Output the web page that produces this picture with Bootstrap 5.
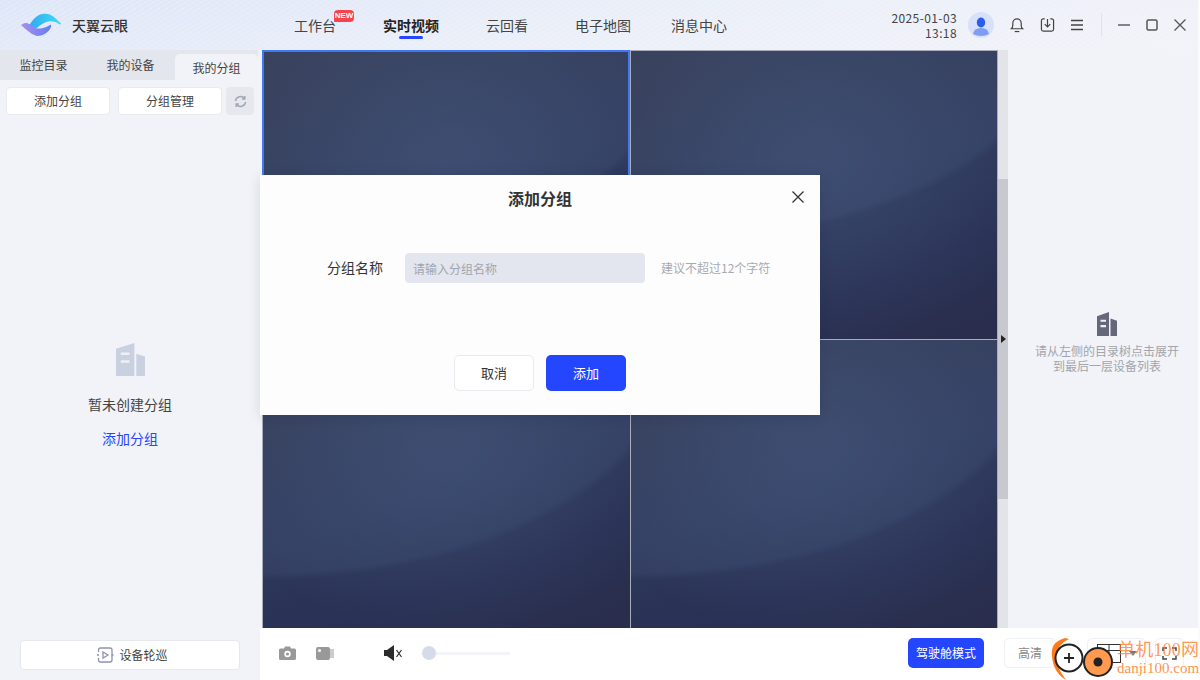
<!DOCTYPE html>
<html lang="zh-CN">
<head>
  <meta charset="UTF-8">
  <title>天翼云眼</title>
  <link href="https://cdn.jsdelivr.net/npm/bootstrap@5.3.0/dist/css/bootstrap.min.css" rel="stylesheet">
  <style>
    html, body { height: 680px; overflow: hidden; }
    body { font-family: "Noto Sans CJK SC", "Noto Sans", sans-serif; font-size: 12px; color: #333; background: #fbfbfc; }
    .app-shell { width: 1198px; height: 680px; position: relative; background: #f1f3f8; }

    .top-bar { height: 50px; background: repeating-linear-gradient(150deg, rgba(255,255,255,0) 0 2px, rgba(255,255,255,.12) 2px 4px), linear-gradient(170deg, #dde6f8 0%, #eaeef8 45%, #f1f3f8 100%); }
    .logo-area { width: 260px; padding-left: 20px; gap: 10px; }
    .logo-name { font-size: 14px; font-weight: 500; color: #333; margin-left: -1px; padding-left: 1px; }
    .main-menu { margin-left: 34px; gap: 47px; font-size: 14px; height: 50px; }
    .menu-item { position: relative; color: #444; line-height: 50px; }
    .menu-item:last-child { margin-left: -7px; }
    .menu-item.is-on { font-weight: 700; color: #222; }
    .menu-item.is-on::after { content: ""; position: absolute; left: 16px; right: 16px; bottom: 11px; height: 3px; border-radius: 2px; background: #2546ff; }
    .new-tag { position: absolute; top: 10px; left: 40px; width: 20px; height: 12px; border-radius: 4px 4px 4px 1px; background: #f5454f; color: #fff; font: 700 8px/12px "Liberation Sans", sans-serif; text-align: center; }
    .top-right { padding-right: 12px; }
    .date-box { font-size: 12px; letter-spacing: .4px; line-height: 15px; text-align: right; color: #444; margin-right: 11px; }
    .avatar-ring { width: 26px; height: 26px; border-radius: 50%; background: #d8e1fa; overflow: hidden; margin-right: 16px; }
    .top-icon { margin-right: 16px; }
    .top-sep { width: 1px; height: 24px; background: #e0e3ea; margin: 0 16px 0 18px; }

    .side-panel { width: 260px; height: 630px; background: #f1f3f8; }
    .tab-row { height: 30px; background: #e3e6ec; width: 258px; }
    .tab-cell { width: 87px; text-align: center; line-height: 30px; color: #444; }
    .tab-cell.is-on { background: #f1f3f8; border-radius: 5px 5px 0 0; margin-top: 4px; line-height: 28px; height: 26px; width: 83px; margin-left: 1px; }
    .tool-row { padding: 7px 6px 0; gap: 8px; }
    .white-btn { width: 104px; height: 28px; padding: 0; font-size: 12px; color: #444; background: #fff; border: 1px solid #e8eaf1; border-radius: 4px; }
    .refresh-btn { width: 28px; height: 28px; margin-left: -4px; background: #e6e8ee; border-radius: 4px; }
    .empty-box { flex: 1; padding-top: 228px; }
    .empty-title { font-size: 14px; line-height: 21px; color: #444; margin-top: 18px; }
    .empty-link { font-size: 14px; line-height: 21px; color: #2546ff; margin-top: 13px; }
    .patrol-btn { width: 220px; height: 30px; margin: 0 0 10px 20px; color: #444; font-size: 12px; background: #fff; border: 1px solid #e6e8ef; border-radius: 4px; gap: 5px; }

    .center-col { width: 748px; height: 630px; }
    .video-wrap { height: 578px; }
    .video-grid { width: 736px; margin-left: 2px; height: 578px; display: grid; grid-template-columns: 367px 366px; grid-template-rows: 288px 288px; gap: 1px; background: #a9adba; padding: 1px 1px 0; }
    .video-cell {
      --edge-y: 240px;
      background:
        radial-gradient(ellipse 230px 190px at 50% 38%, rgba(70,90,128,.5), rgba(70,90,128,0) 100%),
        radial-gradient(ellipse 420px var(--edge-y) at 0 0, rgba(96,116,160,.14) 97%, rgba(96,116,160,0) 100%),
        linear-gradient(160deg, #33384f 0%, #2d385a 50%, #293154 75%, #2a2d4c 100%);
    }
    .video-cell.top-cell { --edge-y: 195px; }
    .video-cell.is-active { --edge-y: 225px; margin: -1px 0 0 -1px; outline: 2px solid #3f79f5; outline-offset: -2px; }
    .video-side { width: 10px; background: #e3e4e8; position: relative; }
    .side-thumb { position: absolute; left: 0; right: 0; top: 129px; height: 320px; background: #c8c9ce; }
    .side-arrow { position: absolute; left: 3px; top: 285px; width: 0; height: 0; border-left: 5px solid #222; border-top: 4px solid transparent; border-bottom: 4px solid transparent; }
    .bottom-bar { height: 52px; background: #fff; width: 938px; padding: 0 0 2px 19px; }
    .volume-track { width: 88px; height: 3px; background: #f3f4f7; position: relative; }
    .volume-knob { position: absolute; left: 0; top: -6px; width: 14px; height: 14px; border-radius: 50%; background: #d5dbe9; }
    .drive-btn { width: 76px; height: 30px; padding: 0; background: #2546ff; color: #fff; font-size: 12px; border: 0; border-radius: 5px; }
    .small-box { height: 30px; background: #fff; border: 1px solid #eef0f4; border-radius: 5px; color: #888; font-size: 12px; }
    .hd-box { width: 52px; margin-left: 20px; }
    .layout-box { width: 59px; margin-left: 31px; gap: 8px; }
    .screen-box { width: 29px; margin-left: 9px; }
    .gap-cam { margin-right: 20px; }
    .gap-rec { margin-right: 50px; }
    .gap-vol { margin-right: 20px; }
    .gap-drive { margin-left: 398px; }

    .right-panel { width: 190px; height: 630px; padding: 262px 0 0 8px; }
    .hint-text { font-size: 12px; line-height: 15px; color: #a3a5ab; text-align: center; margin-top: 7px; }

    .group-dialog { position: absolute; left: 260px; top: 175px; width: 560px; height: 240px; background: #fdfdfe; box-shadow: 0 2px 12px rgba(20,25,50,.12); }
    .dialog-title { font-size: 16px; font-weight: 700; text-align: center; padding-top: 11px; line-height: 24px; color: #333; }
    .dialog-close { position: absolute; top: 16px; right: 16px; width: 12px; height: 12px; display: block; }
    .dialog-form { margin-top: 43px; padding-left: 67px; height: 30px; }
    .dialog-label { font-size: 14px; width: 78px; color: #333; margin-top: -1px; }
    .name-input { width: 240px; height: 30px; padding: 0 8px; font-size: 12px; background: #e3e6ee; border: 0; border-radius: 4px; }
    .name-input::placeholder { color: #a2a5ad; }
    .dialog-tip { margin-left: 16px; color: #a8aab0; font-size: 12px; }
    .dialog-foot { margin-top: 72px; gap: 12px; padding-left: 194px; }
    .cancel-btn, .add-btn { width: 80px; height: 36px; padding: 0; font-size: 13px; border-radius: 5px; }
    .cancel-btn { background: #fff; color: #333; border: 1px solid #e8eaf0; }
    .add-btn { background: #2546ff; color: #fff; border: 0; }

    .site-mark { position: absolute; left: 1050px; top: 636px; width: 150px; height: 44px; pointer-events: none; }
    .mark-cn { position: absolute; left: 67px; top: 2px; font-family: "Liberation Serif", "Noto Sans CJK SC", serif; font-size: 18px; letter-spacing: .2px; line-height: 24px; color: rgba(255,125,40,.8); white-space: nowrap; }
    .mark-en { position: absolute; left: 67px; top: 22px; font-family: "Liberation Serif", serif; font-size: 15px; line-height: 20px; color: rgba(255,125,40,.85); white-space: nowrap; }
  </style>
</head>
<body>
<div class="app-shell">

  <!-- 顶部栏 -->
  <header class="top-bar d-flex align-items-center">
    <div class="logo-area d-flex align-items-center flex-shrink-0">
      <svg width="42" height="24" viewBox="0 0 42 24">
        <defs>
          <linearGradient id="lgA" x1="0" y1="0" x2="1" y2="0"><stop offset="0" stop-color="#2fa9f5"/><stop offset="1" stop-color="#3fdcf0"/></linearGradient>
          <linearGradient id="lgB" x1="0" y1="0" x2="1" y2="0"><stop offset="0" stop-color="#a98df0"/><stop offset="1" stop-color="#5f7ff2"/></linearGradient>
        </defs>
        <path d="M8 14 Q14 4 20 1.500 Q28 -1 34 4 L41 10.500 Q41.500 11.500 40 11.500 Q34 7 28 8.500 Q22 10 17 15 Q12 17 8 14Z" fill="url(#lgA)"/>
        <path d="M1 12 Q4 9.500 7 10 Q12 12 15 15 Q19 16 23 15 Q27 14 31 11.500 Q32 14 28 18.500 Q23 23 17 23 Q12 22 8 18 Q4 15 1 12Z" fill="url(#lgB)"/>
      </svg>
      <span class="logo-name">天翼云眼</span>
    </div>
    <nav class="main-menu d-flex">
      <div class="menu-item">工作台<span class="new-tag">NEW</span></div>
      <div class="menu-item is-on">实时视频</div>
      <div class="menu-item">云回看</div>
      <div class="menu-item">电子地图</div>
      <div class="menu-item">消息中心</div>
    </nav>
    <div class="top-right ms-auto d-flex align-items-center">
      <div class="date-box">2025-01-03<br>13:18</div>
      <div class="avatar-ring">
        <svg width="26" height="26" viewBox="0 0 26 26"><ellipse cx="13" cy="10.500" rx="4.200" ry="5" fill="#2f5cf0"/><path d="M5 22 Q6 16 13 16 Q20 16 21 22 Q13 26 5 22Z" fill="#7f9cf4"/></svg>
      </div>
      <svg class="top-icon" width="14" height="16" viewBox="0 0 15 17" fill="none" stroke="#444" stroke-width="1.300"><path d="M1.500 12.500 Q3 11.500 3 8.500 V6.500 A4.500 4.500 0 0 1 12 6.500 V8.500 Q12 11.500 13.500 12.500Z"/><path d="M5 15.500 H10"/></svg>
      <svg class="top-icon" width="15" height="14" viewBox="0 0 15 15" fill="none" stroke="#444" stroke-width="1.300"><path d="M4.500 1 H3 Q1 1 1 3 V12 Q1 14 3 14 H12 Q14 14 14 12 V3 Q14 1 12 1 H10.500"/><path d="M7.500 1 V9 M4.500 6.500 L7.500 9.500 L10.500 6.500"/></svg>
      <svg width="12" height="12" viewBox="0 0 12 12" stroke="#444" stroke-width="1.300"><path d="M0 1.500 H12 M0 6 H12 M0 10.500 H12"/></svg>
      <div class="top-sep"></div>
      <svg class="top-icon" width="12" height="12" viewBox="0 0 12 12" stroke="#555" stroke-width="1.400"><path d="M0 6 H12"/></svg>
      <svg class="top-icon" width="12" height="12" viewBox="0 0 12 12" fill="none" stroke="#555" stroke-width="1.500"><rect x="1" y="1" width="10" height="10" rx="1.500"/></svg>
      <svg width="12" height="12" viewBox="0 0 12 12" stroke="#555" stroke-width="1.300"><path d="M0.500 0.500 L11.500 11.500 M11.500 0.500 L0.500 11.500"/></svg>
    </div>
  </header>

  <div class="d-flex">
    <!-- 左侧目录 -->
    <aside class="side-panel d-flex flex-column flex-shrink-0">
      <div class="tab-row d-flex">
        <div class="tab-cell">监控目录</div>
        <div class="tab-cell">我的设备</div>
        <div class="tab-cell is-on">我的分组</div>
      </div>
      <div class="tool-row d-flex align-items-center">
        <button class="btn white-btn">添加分组</button>
        <button class="btn white-btn">分组管理</button>
        <div class="refresh-btn d-flex align-items-center justify-content-center">
          <svg width="13" height="13" viewBox="0 0 13 13" fill="none" stroke="#a2a7b4" stroke-width="1.500"><path d="M1.500 6 A5 5 0 0 1 10.500 3.500"/><path d="M11.500 7 A5 5 0 0 1 2.500 9.500"/><path d="M10.800 1 V4 H8 M2.200 12 V9 H5"/></svg>
        </div>
      </div>
      <div class="empty-box d-flex flex-column align-items-center">
        <svg width="29" height="33" viewBox="0 0 30 34"><path d="M0 6 L19 0 V34 H0Z" fill="#c9d0e0"/><path d="M21 11 L30 14 V34 H21Z" fill="#c9d0e0"/><path d="M5 11 H14 M5 19 H14" stroke="#eef0f6" stroke-width="2.500"/></svg>
        <div class="empty-title">暂未创建分组</div>
        <div class="empty-link">添加分组</div>
      </div>
      <button class="btn patrol-btn d-flex align-items-center justify-content-center ps-1 py-0 pe-0">
        <svg width="18" height="16" viewBox="0 0 18 16" fill="none" stroke="#8f93b3" stroke-width="1.300"><path d="M2.500 5 V3 Q2.500 1 4.500 1 H14 Q16 1 16 3 V13 Q16 15 14 15 H4.500 Q2.500 15 2.500 13 V11"/><path d="M7 5 L12 8 L7 11Z"/><path d="M1 8 H3 M15.500 8 H17.500"/></svg>
        设备轮巡
      </button>
    </aside>

    <!-- 视频区 -->
    <section class="center-col d-flex flex-column flex-shrink-0">
      <div class="video-wrap d-flex">
        <div class="video-grid">
          <div class="video-cell top-cell is-active"></div>
          <div class="video-cell top-cell"></div>
          <div class="video-cell"></div>
          <div class="video-cell"></div>
        </div>
        <div class="video-side"><div class="side-thumb"></div><div class="side-arrow"></div></div>
      </div>
      <div class="bottom-bar d-flex align-items-center position-relative">
        <svg class="gap-cam" width="17" height="14" viewBox="0 0 17 14"><path d="M1.500 2.500 H5 L6 0.500 H11 L12 2.500 H15.500 Q17 2.500 17 4 V12.500 Q17 14 15.500 14 H1.500 Q0 14 0 12.500 V4 Q0 2.500 1.500 2.500Z" fill="#999"/><circle cx="8.500" cy="8" r="3.200" fill="#fff"/><circle cx="8.500" cy="8" r="1.600" fill="#999"/></svg>
        <svg class="gap-rec" width="18" height="13" viewBox="0 0 18 13"><rect width="14" height="13" rx="2" fill="#999"/><circle cx="3.500" cy="3.500" r="1.500" fill="#fff"/><path d="M14 2 H18 V11 H14Z" fill="#ccc"/></svg>
        <svg class="gap-vol" width="18" height="16" viewBox="0 0 18 16"><path d="M0 5 H3 L10 0 V16 L3 11 H0Z" fill="#2b2b2b"/><path d="M12.500 5 L17.500 12 M17.500 5 L12.500 12" stroke="#2b2b2b" stroke-width="1.200"/></svg>
        <div class="volume-track"><div class="volume-knob"></div></div>
        <button class="btn drive-btn gap-drive">驾驶舱模式</button>
        <div class="small-box hd-box d-flex align-items-center justify-content-center">高清</div>
        <div class="small-box layout-box d-flex align-items-center justify-content-center">
          <svg width="24" height="19" viewBox="0 0 24 19" fill="none" stroke="#333"><rect x="0.500" y="0.500" width="23" height="18"/><path d="M0 6.500 H24 M12 0 V19"/></svg>
          <svg width="8" height="5" viewBox="0 0 8 5"><path d="M0 0 H8 L4 5Z" fill="#777"/></svg>
        </div>
        <div class="small-box screen-box d-flex align-items-center justify-content-center">
          <svg width="15" height="13" viewBox="0 0 15 13" fill="none" stroke="#444" stroke-width="1.500"><path d="M1 4 V1 H5 M10 1 H14 V4 M14 9 V12 H10 M5 12 H1 V9"/></svg>
        </div>
      </div>
    </section>

    <!-- 右侧提示 -->
    <aside class="right-panel d-flex flex-column align-items-center flex-shrink-0">
      <svg width="20" height="24" viewBox="0 0 20 22" preserveAspectRatio="none"><path d="M0 4 L12 0 V22 H0Z" fill="#65677a"/><path d="M13.500 6 L20 8 V22 H13.500Z" fill="#65677a"/><path d="M3.500 8 H9 M3.500 13 H9" stroke="#eef0f6" stroke-width="2"/></svg>
      <div class="hint-text">请从左侧的目录树点击展开<br>到最后一层设备列表</div>
    </aside>
  </div>

  <!-- 添加分组 弹窗 -->
  <div class="group-dialog">
    <div class="dialog-title">添加分组</div>
    <svg class="dialog-close" viewBox="0 0 12 12" stroke="#333" stroke-width="1.300"><path d="M0.500 0.500 L11.500 11.500 M11.500 0.500 L0.500 11.500"/></svg>
    <div class="dialog-form d-flex align-items-center">
      <div class="dialog-label">分组名称</div>
      <input class="name-input" type="text" placeholder="请输入分组名称">
      <div class="dialog-tip">建议不超过12个字符</div>
    </div>
    <div class="dialog-foot d-flex">
      <button class="btn cancel-btn">取消</button>
      <button class="btn add-btn">添加</button>
    </div>
  </div>

  <!-- 水印 -->
  <div class="site-mark">
    <svg width="66" height="44" viewBox="0 0 66 44" class="position-absolute top-0 start-0">
      <path d="M15 2 Q0 6 2 20 Q3 36 16 44 Q7 32 6 22 Q7 8 19 3Z" fill="#ff7a1a"/>
      <circle cx="19" cy="22" r="13.500" fill="#fff" stroke="#222" stroke-width="2"/>
      <path d="M14 22 H24 M19 17 V27" stroke="#222" stroke-width="1.800"/>
      <circle cx="48" cy="26" r="14" fill="#ff9a50" stroke="#222" stroke-width="2"/>
      <circle cx="48" cy="26" r="4.500" fill="#222"/>
    </svg>
    <span class="mark-cn">单机100网</span>
    <span class="mark-en">danji100.com</span>
  </div>
</div>
<script src="https://cdn.jsdelivr.net/npm/bootstrap@5.3.0/dist/js/bootstrap.bundle.min.js"></script>
</body>
</html>
